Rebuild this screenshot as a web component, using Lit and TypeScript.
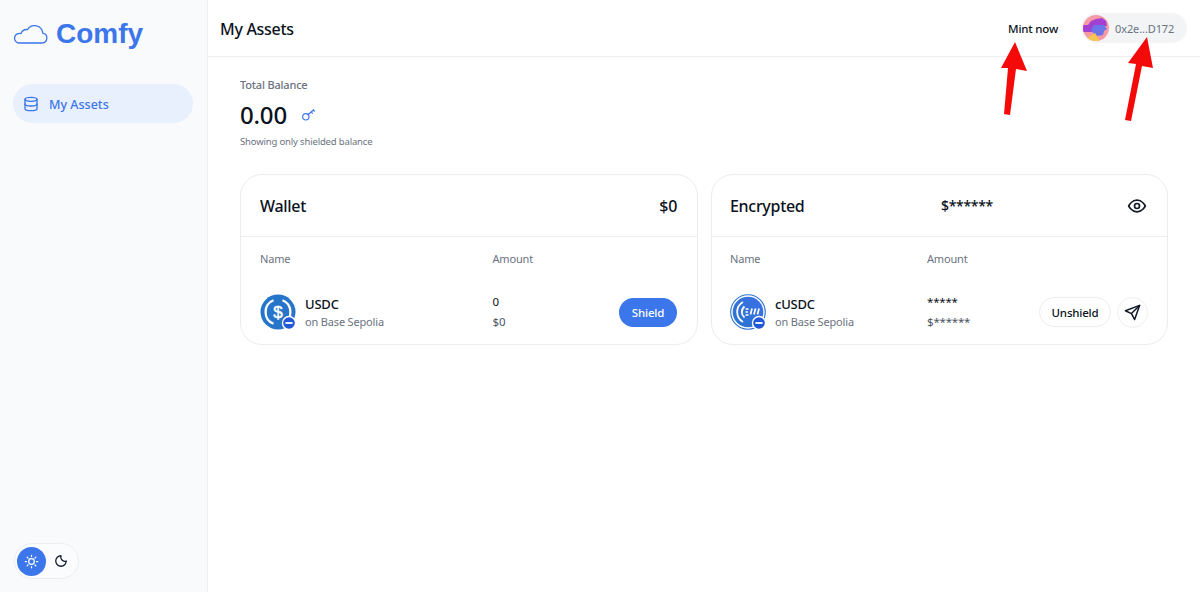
import { LitElement, html, css, svg } from "lit";
import { customElement } from "lit/decorators.js";

const badge = svg`<circle cx="29" cy="29" r="7.200" fill="#fff"/><circle cx="29" cy="29" r="5.800" fill="#2158d8"/><rect x="25.400" y="28.100" width="7.200" height="1.800" fill="#fff"/>`;

@customElement("app-root")
export class AppRoot extends LitElement {
  static styles = css`
    :host { display: block; width: 1200px; height: 592px; position: relative; overflow: hidden; background: #fff;
      font-family: "Noto Sans", sans-serif; color: #0b1220; }
    .app { display: flex; height: 592px; }
    .side { width: 208px; flex: none; box-sizing: border-box; border-right: 1px solid #eceef2; background: #f9fafc;
      display: flex; flex-direction: column; padding: 0 13px 13px; }
    .logo { display: flex; align-items: center; gap: 8px; height: 67px; margin-left: -1px; color: #3b76ea; }
    .logo span { font: 700 28px "Liberation Sans", sans-serif; }
    .nav { margin-top: 17px; height: 39px; width: 180px; border-radius: 20px; background: #e8effd; color: #3b76ea;
      display: flex; align-items: center; gap: 10px; padding-left: 10px; box-sizing: border-box; font-size: 12.500px; font-weight: 500; }
    .nav span { padding-top: 1px; }
    .mode { margin-top: auto; margin-left: 1px; width: 65px; height: 36px; box-sizing: border-box; border: 1px solid #eceef2; border-radius: 18px;
      display: flex; align-items: center; padding-left: 2px; gap: 8px; background: #fbfcfd; }
    .sun { width: 29px; height: 29px; border-radius: 50%; background: #3b76ea; display: flex; align-items: center; justify-content: center; }
    .main { flex: 1; min-width: 0; display: flex; flex-direction: column; }
    .top { height: 57px; box-sizing: border-box; border-bottom: 1px solid #eceef2; display: flex; align-items: center; padding: 0 13px 0 12px; }
    .top h1 { margin: 0; font-size: 16px; letter-spacing: -.3px; font-weight: 500; flex: 1; position: relative; top: 1px; }
    .mint { font-size: 11.500px; letter-spacing: -.2px; font-weight: 500; margin-right: 23px; }
    .acct { width: 106px; height: 30px; box-sizing: border-box; background: #f3f4f6; border-radius: 15px; display: flex; align-items: center; gap: 6px; padding-left: 2px;
      font-size: 11px; letter-spacing: -.1px; color: #6b7280; }
    .body { padding: 20px 32px 0; }
    .tb { font-size: 11px; letter-spacing: -.18px; font-weight: 500; color: #6b7280; line-height: 16px; }
    .bal { display: flex; align-items: center; gap: 14px; margin-top: 3px; height: 36px; font-size: 24px; font-weight: 500; letter-spacing: -.2px; }
    .hint { font-size: 9.500px; letter-spacing: -.16px; color: #6b7280; margin-top: 3px; line-height: 14px; }
    .cards { display: grid; grid-template-columns: 458px 457px; gap: 13px; margin-top: 25px; }
    .card { border: 1px solid #eaecef; border-radius: 22px; height: 171px; box-sizing: border-box; }
    .hd { height: 62px; box-sizing: border-box; border-bottom: 1px solid #eceef2; display: flex; align-items: center; padding: 0 20px 0 19px; font-size: 16px; letter-spacing: -.3px; font-weight: 500; }
    .hd .a { flex: 1; }
    .hd .mid { flex: 1; font-size: 14px; letter-spacing: -.3px; }
    .cols { display: flex; padding: 14px 20px 0 19px; font-size: 11px; letter-spacing: -.18px; color: #6b7280; line-height: 16px; }
    .row { display: flex; align-items: center; padding: 0 20px 0 19px; margin-top: 25px; height: 40px; }
    .tok { display: flex; gap: 9px; align-items: center; }
    .tok svg { display: block; }
    .tx { padding-top: 2px; }
    .tn { font-size: 13px; font-weight: 500; line-height: 18px; letter-spacing: -.2px; }
    .ts { font-size: 11px; letter-spacing: -.17px; color: #6b7280; line-height: 18px; }
    .amt { font-size: 11.500px; line-height: 20px; letter-spacing: -.2px; }
    .amt div + div { color: #4b5563; }
    .act { margin-left: auto; display: flex; gap: 6px; align-items: center; }
    .shield { width: 58px; height: 29px; border-radius: 15px; background: #3b76ea; color: #fff; font-size: 11.500px; letter-spacing: -.2px; font-weight: 500; display: flex; align-items: center; justify-content: center; }
    .un { width: 72px; height: 30px; box-sizing: border-box; border: 1px solid #eaecef; border-radius: 15px; font-size: 11.500px; letter-spacing: -.2px; font-weight: 500; display: flex; align-items: center; justify-content: center; }
    .send { width: 31px; height: 31px; box-sizing: border-box; border: 1px solid #eceef2; border-radius: 50%; display: flex; align-items: center; justify-content: center; }
    .r .hd, .r .cols { padding-left: 18px; }
    .r .row { padding-left: 18px; padding-right: 19px; }
    .arrows { position: absolute; left: 0; top: 0; pointer-events: none; }
  `;

  render() {
    return html`
      <div class="app">
        <aside class="side">
          <div class="logo">
            <svg width="36" height="20" viewBox="0 0 36 20" fill="none" stroke="currentColor" stroke-width="1.300">
              <path d="M6 19h24a5 5 0 0 0 .8-9.900 8.300 8.300 0 0 0-15.300-3.500 6 6 0 0 0-6.500 4A4.800 4.800 0 0 0 6 19Z" stroke-linejoin="round"/>
            </svg>
            <span>Comfy</span>
          </div>
          <div class="nav">
            <svg width="16" height="16" viewBox="0 0 24 24" fill="none" stroke="currentColor" stroke-width="2" stroke-linecap="round">
              <ellipse cx="12" cy="5" rx="9" ry="3"/><path d="M3 5v14c0 1.700 4 3 9 3s9-1.300 9-3V5"/><path d="M3 12c0 1.700 4 3 9 3s9-1.300 9-3"/>
            </svg>
            <span>My Assets</span>
          </div>
          <div class="mode">
            <div class="sun">
              <svg width="15" height="15" viewBox="0 0 24 24" fill="none" stroke="#fff" stroke-width="2" stroke-linecap="round">
                <circle cx="12" cy="12" r="4.500"/><path d="M12 2v2M12 20v2M2 12h2M20 12h2M5 5l1.400 1.400M17.600 17.600 19 19M5 19l1.400-1.400M17.600 6.400 19 5"/>
              </svg>
            </div>
            <svg width="14" height="14" viewBox="0 0 24 24" fill="none" stroke="#111827" stroke-width="2.200" stroke-linecap="round" stroke-linejoin="round">
              <path d="M12 3a9 9 0 1 0 9 9 7 7 0 0 1-9-9Z"/>
            </svg>
          </div>
        </aside>
        <main class="main">
          <header class="top">
            <h1>My Assets</h1>
            <span class="mint">Mint now</span>
            <div class="acct">
              <svg width="26" height="26" viewBox="0 0 26 26">
                <defs><clipPath id="av"><circle cx="13" cy="13" r="13"/></clipPath></defs>
                <g clip-path="url(#av)">
                  <rect width="26" height="26" fill="#f79aa5"/>
                  <path d="M0 10h5l3-4 5-2 6-1 4 3 1 5h-8l-6 3-1 3H0Z" fill="#a33fd2"/>
                  <path d="M11 10h10l3 4-3 2-1 4-6 1-4-3-2-3Z" fill="#6b74e8"/>
                  <path d="M4 23l8-5 5 8H5Z" fill="#f6c650"/>
                </g>
              </svg>
              <span>0x2e...D172</span>
            </div>
          </header>
          <div class="body">
            <div class="tb">Total Balance</div>
            <div class="bal">
              <span>0.00</span>
              <svg width="16" height="16" viewBox="0 0 16 16" fill="none" stroke="#3b76ea" stroke-width="1.200">
                <circle cx="4.800" cy="10.800" r="3.200"/><path d="M7.200 8.500 13 3.500M10 6l1.800 1.500M12.300 4l1.400 1.500"/>
              </svg>
            </div>
            <div class="hint">Showing only shielded balance</div>
            <div class="cards">
              <section class="card">
                <div class="hd"><span class="a">Wallet</span><span>$0</span></div>
                <div class="cols"><span style="width:232.500px">Name</span><span>Amount</span></div>
                <div class="row">
                  <div class="tok" style="width:232.500px">
                    <svg width="36" height="36" viewBox="0 0 36 36">
                      <circle cx="18" cy="18" r="17.500" fill="#2775ca"/>
                      <g fill="none" stroke="#fff" stroke-width="2.300">
                        <path d="M13.500 6.300a12.600 12.600 0 0 0 0 23.400"/><path d="M22.500 6.300a12.600 12.600 0 0 1 0 23.400"/>
                      </g>
                      <text x="18" y="24" text-anchor="middle" fill="#fff" stroke="#fff" stroke-width=".5" font-family="Liberation Sans" font-size="17">$</text>
                      ${badge}
                    </svg>
                    <div class="tx"><div class="tn">USDC</div><div class="ts">on Base Sepolia</div></div>
                  </div>
                  <div class="amt"><div>0</div><div>$0</div></div>
                  <div class="act"><div class="shield">Shield</div></div>
                </div>
              </section>
              <section class="card r">
                <div class="hd"><span style="width:211px">Encrypted</span><span class="mid">$******</span>
                  <svg width="20" height="20" viewBox="0 0 24 24" fill="none" stroke="#111827" stroke-width="2" stroke-linecap="round" stroke-linejoin="round">
                    <path d="M2 12s3.600-7 10-7 10 7 10 7-3.600 7-10 7-10-7-10-7Z"/><circle cx="12" cy="12" r="3"/>
                  </svg>
                </div>
                <div class="cols"><span style="width:197px">Name</span><span>Amount</span></div>
                <div class="row">
                  <div class="tok" style="width:197px">
                    <svg width="36" height="36" viewBox="0 0 36 36">
                      <defs><linearGradient id="cu" x1="0" y1="1" x2="1" y2="0"><stop offset="0" stop-color="#2775ca"/><stop offset="1" stop-color="#3d6fe8"/></linearGradient></defs>
                      <circle cx="18" cy="18" r="17.300" fill="#fff" stroke="#2f74cf" stroke-width="1.100"/>
                      <circle cx="18" cy="18" r="15.300" fill="url(#cu)"/>
                      <g fill="none" stroke="#fff" stroke-width="1.800">
                        <path d="M13 8a11.500 11.500 0 0 0 0 20"/>
                        <path d="M14.500 12.500a7 7 0 0 0 0 11"/>
                      </g>
                      <g stroke="#fff" stroke-width="1.300"><path d="M15.500 15h3M15.500 18h2.500M15.500 21h3"/></g>
                      <g stroke="#fff" stroke-width="1.700"><path d="M20.500 20.500l1.500-6M24 20.500l1.500-6M27.500 20.500l1.500-6"/></g>
                      ${badge}
                    </svg>
                    <div class="tx"><div class="tn">cUSDC</div><div class="ts">on Base Sepolia</div></div>
                  </div>
                  <div class="amt"><div>*****</div><div>$******</div></div>
                  <div class="act">
                    <div class="un">Unshield</div>
                    <div class="send">
                      <svg width="17" height="17" viewBox="0 0 24 24" fill="none" stroke="#111827" stroke-width="2.100" stroke-linejoin="round" stroke-linecap="round">
                        <path d="M22 2 2 9.500l8.500 4L15 22 22 2Z"/><path d="M22 2 10.500 13.500"/>
                      </svg>
                    </div>
                  </div>
                </div>
              </section>
            </div>
          </div>
        </main>
      </div>
      <svg class="arrows" width="1200" height="592" viewBox="0 0 1200 592" fill="#f50a0a">
        <polygon points="1015,42 1027,71 1016,69 1010,115 1004,114 1008,68 1001,68"/>
        <polygon points="1147,37 1153,68 1142,66 1131,121 1125,120 1136,64 1128,63"/>
      </svg>
    `;
  }
}
